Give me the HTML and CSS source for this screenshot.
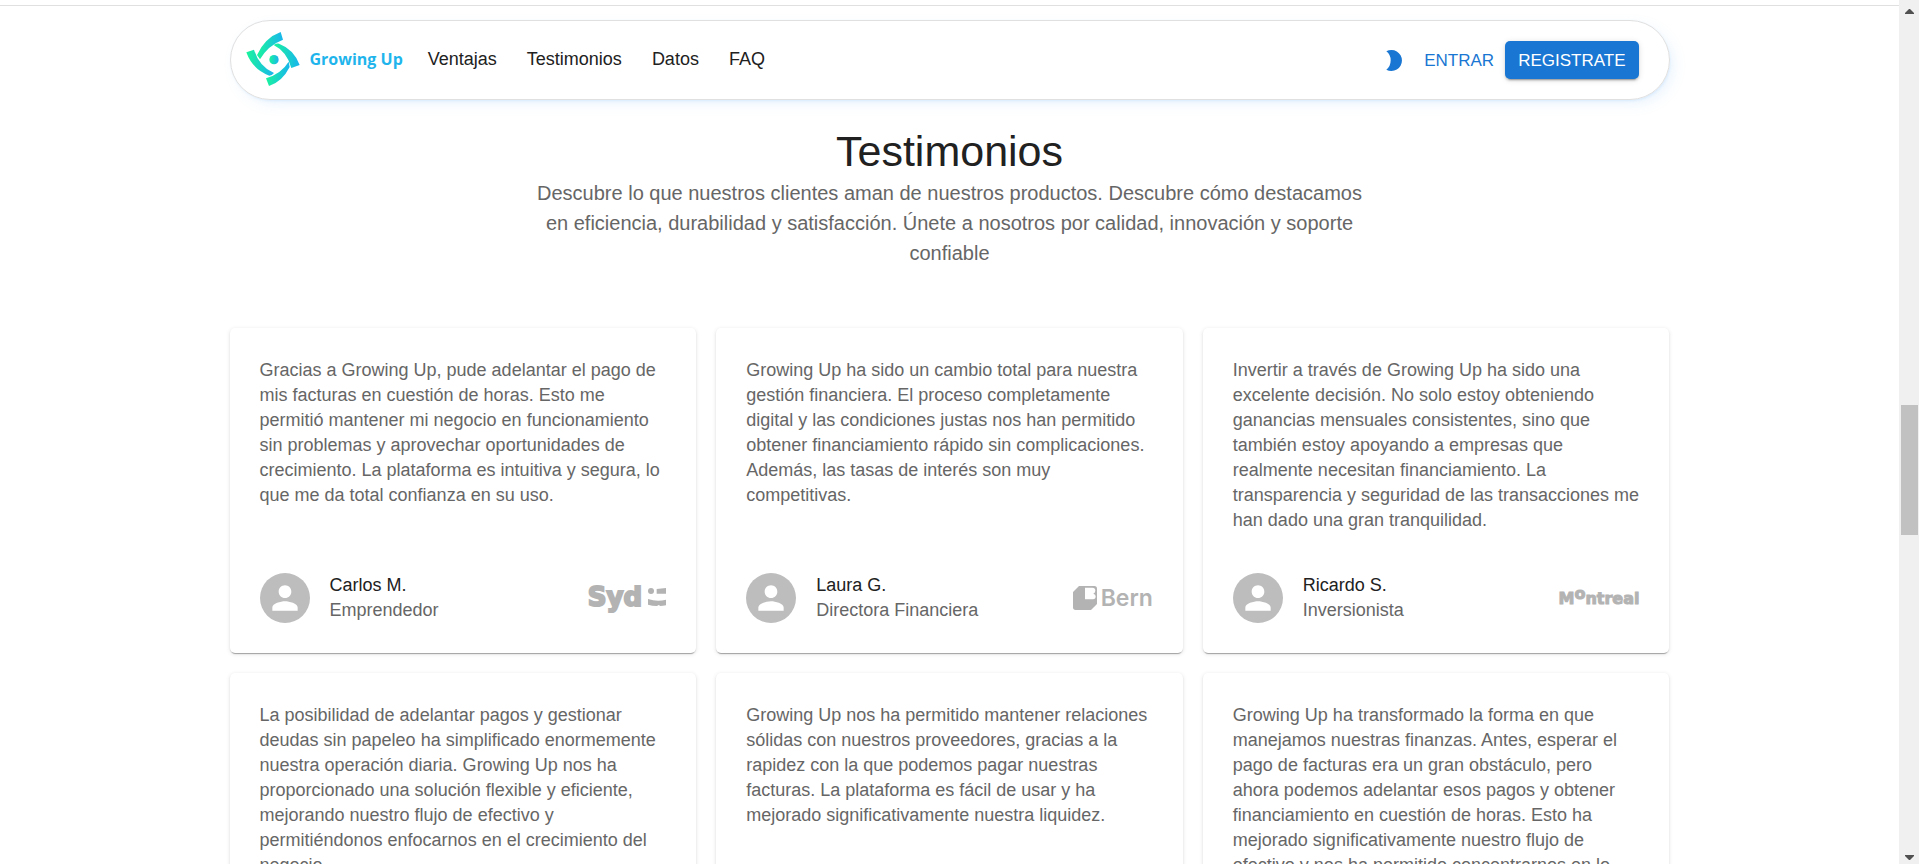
FILE: index.html
```html
<!DOCTYPE html>
<html lang="es">
<head>
<meta charset="utf-8">
<title>Growing Up</title>
<link rel="stylesheet" href="styles.css">
</head>
<body>
<svg class="defs" aria-hidden="true">
  <symbol id="person" viewBox="0 0 24 24"><path d="M12 12c2.210 0 4-1.790 4-4s-1.790-4-4-4-4 1.790-4 4 1.790 4 4 4zm0 2c-2.670 0-8 1.340-8 4v2h16v-2c0-2.660-5.330-4-8-4z"/></symbol>
</svg>
<div class="page">
  <div class="divider"></div>
  <header class="navbar">
    <a class="brand" href="#">
      <svg class="brand-mark" viewBox="80 96 160 162" aria-hidden="true">
        <defs>
          <linearGradient id="brand"><stop offset="0" stop-color="#1af59c"/><stop offset="1" stop-color="#18b4ee"/></linearGradient>
        </defs>
        <g fill="url(#brand)">
          <path d="M183 96L190 119Q145 136 121 178L112 165Q136 113 183 96Z"/>
          <path d="M80 157L103 149Q119 200 163 219Q157 227 149 227Q98 208 80 157Z"/>
          <path d="M162 135Q170 130 178 131Q223 148 240 195L215 204Q202 155 162 135Z"/>
          <path d="M207 185L210 201Q188 245 148 258L139 235Q186 220 207 185Z"/>
          <circle cx="163" cy="179" r="14"/>
        </g>
      </svg>
      <span>Growing Up</span>
    </a>
    <nav class="links">
      <a href="#">Ventajas</a>
      <a href="#">Testimonios</a>
      <a href="#">Datos</a>
      <a href="#">FAQ</a>
    </nav>
    <div class="actions">
      <button class="mode" type="button" aria-label="Cambiar tema">
        <svg viewBox="82 150 46 63" aria-hidden="true"><path d="M82 154A31.500 31.500 0 1 1 82 209Q95 199 95 181Q95 164 82 154Z"/></svg>
      </button>
      <button class="enter" type="button">ENTRAR</button>
      <button class="register" type="button">REGISTRATE</button>
    </div>
  </header>
  <main class="testimonials">
    <h1>Testimonios</h1>
    <p class="lead">Descubre lo que nuestros clientes aman de nuestros productos. Descubre cómo destacamos en eficiencia, durabilidad y satisfacción. Únete a nosotros por calidad, innovación y soporte confiable</p>
    <div class="cards">
      <article class="card">
        <p>Gracias a Growing Up, pude adelantar el pago de mis facturas en cuestión de horas. Esto me permitió mantener mi negocio en funcionamiento sin problemas y aprovechar oportunidades de crecimiento. La plataforma es intuitiva y segura, lo que me da total confianza en su uso.</p>
        <footer>
          <span class="avatar"><svg aria-hidden="true"><use href="#person"/></svg></span>
          <div class="who"><strong>Carlos M.</strong><span>Emprendedor</span></div>
          <div class="company syd"><span>Syd</span>
            <svg viewBox="0 0 54 54" aria-hidden="true"><ellipse cx="9" cy="9" rx="9" ry="9"/><path d="M26 3L54 0V17H26ZM0 33Q27 42 54 35V52Q44 54 37 54L32 51L27 54Q12 54 0 50Z"/></svg>
          </div>
        </footer>
      </article>
      <article class="card">
        <p>Growing Up ha sido un cambio total para nuestra gestión financiera. El proceso completamente digital y las condiciones justas nos han permitido obtener financiamiento rápido sin complicaciones. Además, las tasas de interés son muy competitivas.</p>
        <footer>
          <span class="avatar"><svg aria-hidden="true"><use href="#person"/></svg></span>
          <div class="who"><strong>Laura G.</strong><span>Directora Financiera</span></div>
          <div class="company bern">
            <svg viewBox="0 0 72 72" aria-hidden="true"><path fill-rule="evenodd" d="M18 0H64Q72 0 72 8V54L54 72H8Q0 72 0 64V18ZM36 5V40H60Q68 40 68 31Q68 25 61 23Q67 20 67 14Q67 5 58 5Z"/></svg>
            <span>Bern</span>
          </div>
        </footer>
      </article>
      <article class="card">
        <p>Invertir a través de Growing Up ha sido una excelente decisión. No solo estoy obteniendo ganancias mensuales consistentes, sino que también estoy apoyando a empresas que realmente necesitan financiamiento. La transparencia y seguridad de las transacciones me han dado una gran tranquilidad.</p>
        <footer>
          <span class="avatar"><svg aria-hidden="true"><use href="#person"/></svg></span>
          <div class="who"><strong>Ricardo S.</strong><span>Inversionista</span></div>
          <div class="company montreal"><span>M<sup>o</sup>ntreal</span></div>
        </footer>
      </article>
      <article class="card">
        <p>La posibilidad de adelantar pagos y gestionar deudas sin papeleo ha simplificado enormemente nuestra operación diaria. Growing Up nos ha proporcionado una solución flexible y eficiente, mejorando nuestro flujo de efectivo y permitiéndonos enfocarnos en el crecimiento del negocio.</p>
      </article>
      <article class="card">
        <p>Growing Up nos ha permitido mantener relaciones sólidas con nuestros proveedores, gracias a la rapidez con la que podemos pagar nuestras facturas. La plataforma es fácil de usar y ha mejorado significativamente nuestra liquidez.</p>
      </article>
      <article class="card">
        <p>Growing Up ha transformado la forma en que manejamos nuestras finanzas. Antes, esperar el pago de facturas era un gran obstáculo, pero ahora podemos adelantar esos pagos y obtener financiamiento en cuestión de horas. Esto ha mejorado significativamente nuestro flujo de efectivo y nos ha permitido concentrarnos en lo</p>
      </article>
    </div>
  </main>
</div>
<div class="scrollbar" aria-hidden="true">
  <svg viewBox="0 0 9 5"><path d="M4 0h1l4 4v1H0V4z"/></svg>
  <div class="track"><div class="thumb"></div></div>
  <svg viewBox="0 0 9 5"><path d="M4 5h1l4-4V0H0v1z"/></svg>
</div>
</body>
</html>
```
FILE: styles.css
```css
* { box-sizing: border-box; }

body {
  margin: 0;
  height: 100vh;
  display: flex;
  overflow: hidden;
  background: #fff;
  color: #212121;
  font-family: "Liberation Sans", Arial, sans-serif;
  font-size: 18px;
  line-height: 25px;
}

h1, p { margin: 0; }
a { color: inherit; text-decoration: none; }

button {
  border: 0;
  background: none;
  font: inherit;
  font-size: 17px;
  color: #1976d2;
}

.defs { position: absolute; width: 0; height: 0; }

.page { flex: 1; min-width: 0; }

.divider { padding-top: 5px; border-bottom: 1px solid #e0e0e0; }

.navbar,
.testimonials {
  width: calc(100% - 60px);
  max-width: 1440px;
  margin: 0 auto;
}

.navbar {
  display: flex;
  align-items: center;
  height: 80px;
  margin-top: 14px;
  padding: 0 30px 2px 15px;
  border: 1px solid #e0e0e0;
  border-radius: 40px;
  box-shadow: 0 0 1px rgba(85, 166, 246, 0.1), 1px 2px 3px -1px rgba(85, 166, 246, 0.15), 5px 5px 15px -3px rgba(85, 166, 246, 0.15);
}

.brand {
  display: flex;
  align-items: center;
  gap: 10px;
  color: #1fb5ec;
  font-family: "Open Sans", sans-serif;
  font-size: 16px;
  font-weight: 700;
}
.brand-mark { width: 54px; height: 54px; }

.links { display: flex; gap: 30px; margin-left: 25px; }

.actions { display: flex; align-items: center; margin-left: auto; padding-top: 2px; }
.mode { display: flex; padding: 0 11px; }
.mode svg { width: 16px; height: 21px; fill: #1976d2; }
.enter { padding: 0 11px; }
.register {
  height: 38px;
  padding: 0 13px;
  border-radius: 5px;
  background: #1976d2;
  color: #fff;
  box-shadow: 0 4px 1px -3px rgba(0, 0, 0, 0.2), 0 2px 2px rgba(0, 0, 0, 0.14), 0 1px 6px rgba(0, 0, 0, 0.12);
}

.testimonials { padding-top: 25px; }
h1 { font-size: 43px; line-height: 53px; font-weight: 400; text-align: center; }
.lead {
  width: 59%;
  margin: 0 auto 60px;
  font-size: 20px;
  line-height: 30px;
  text-align: center;
  color: #666;
}

.cards { display: grid; grid-template-columns: repeat(3, 1fr); gap: 20px; }
.card {
  display: flex;
  flex-direction: column;
  justify-content: space-between;
  gap: 40px;
  padding: 30px;
  border-radius: 5px;
  background: #fff;
  box-shadow: 0 3px 1px -2px rgba(0, 0, 0, 0.2), 0 1px 1px rgba(0, 0, 0, 0.14), 0 1px 4px rgba(0, 0, 0, 0.12);
  color: #666;
}
.card footer { display: flex; align-items: center; gap: 20px; }
.avatar {
  display: flex;
  padding: 6px;
  border-radius: 50%;
  background: #bdbdbd;
}
.avatar svg { width: 38px; height: 38px; fill: #fff; }
.who { display: flex; flex-direction: column; }
.who strong { font-weight: 400; color: #212121; }

.company {
  display: flex;
  align-items: center;
  margin-left: auto;
  color: #b3b3b3;
  fill: #b3b3b3;
  font-family: "DejaVu Sans", sans-serif;
  font-weight: 700;
}
.syd { gap: 6px; padding-bottom: 2px; font-size: 26px; -webkit-text-stroke: 2px #b3b3b3; }
.syd svg { width: 18px; height: 18px; stroke: none; }
.bern { gap: 4px; font-family: Inter, sans-serif; font-size: 23px; font-weight: 600; }
.bern svg { width: 24px; height: 24px; }
.montreal { font-size: 16px; -webkit-text-stroke: 1px #b3b3b3; }
.montreal sup { font-size: inherit; line-height: 0; vertical-align: 5px; }

.scrollbar {
  display: flex;
  flex-direction: column;
  align-items: center;
  width: 20px;
  padding: 9px 0 4px;
  background: #f0f0f0;
}
.scrollbar svg { width: 9px; height: 5px; fill: #505050; }
.track { flex: 1; width: 17px; padding-top: 391px; }
.thumb { height: 130px; background: #c1c1c1; }
```
